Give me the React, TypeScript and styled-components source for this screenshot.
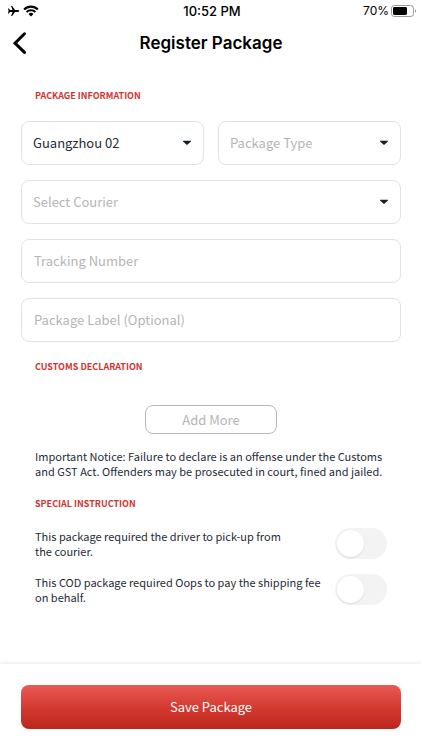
import React, { useId, useState } from "react";
import styled, { createGlobalStyle } from "styled-components";

const bodyFont = '"Noto Sans CJK SC", "Noto Sans", sans-serif';
const systemFont = 'Inter, "Liberation Sans", sans-serif';

const colors = {
  ink: "#252b37",
  muted: "#b5b5b5",
  line: "#e2e2e2",
  red: "#d0342f",
};

const GlobalStyle = createGlobalStyle`
  *, *::before, *::after { box-sizing: border-box; }
  body { margin: 0; background: #fff; color: ${colors.ink}; font-family: ${bodyFont}; }
  button, input, select { font: inherit; margin: 0; }
`;

const Screen = styled.div`
  display: flex;
  flex-direction: column;
  min-height: 100vh;
`;

const StatusBar = styled.div`
  display: grid;
  grid-template-columns: 1fr auto 1fr;
  align-items: center;
  height: 22px;
  padding: 0 5px 0 7px;
  color: #000;
  font-family: ${systemFont};
  line-height: 22px;
`;

const StatusGroup = styled.div<{ $end?: boolean }>`
  display: flex;
  align-items: center;
  justify-content: ${(p) => (p.$end ? "flex-end" : "flex-start")};
  gap: ${(p) => (p.$end ? 2 : 3)}px;
  font-size: 12px;
`;

const Clock = styled.time`
  font-size: 13px;
  font-weight: 500;
`;

const Header = styled.header`
  display: grid;
  grid-template-columns: 40px 1fr 40px;
  align-items: center;
  height: 42px;
`;

const BackButton = styled.button`
  display: flex;
  align-items: center;
  height: 42px;
  padding: 0 0 0 12px;
  border: 0;
  background: none;
  color: #000;
`;

const Title = styled.h1`
  margin: 0;
  color: #000;
  font-family: ${systemFont};
  font-size: 17px;
  font-weight: 600;
  line-height: 24px;
  text-align: center;
`;

const Content = styled.main`
  flex: 1;
  padding: 24px 21px;
`;

const SectionTitle = styled.h2`
  margin: 0 14px;
  color: ${colors.red};
  font-size: 9px;
  font-weight: 700;
  line-height: 16px;
  text-transform: uppercase;
`;

const Fields = styled.div`
  display: grid;
  grid-template-columns: 1fr 1fr;
  gap: 15px 14px;
  margin: 17px 0;
`;

const FieldBox = styled.div<{ $wide?: boolean }>`
  display: grid;
  align-items: center;
  grid-column: ${(p) => (p.$wide ? "1 / -1" : "auto")};
  min-width: 0;

  > * { grid-area: 1 / 1; }
  > svg { justify-self: end; margin-right: 12px; pointer-events: none; }
`;

const Select = styled.select<{ $empty: boolean }>`
  appearance: none;
  width: 100%;
  height: 44px;
  padding: 0 30px 2px 11px;
  border: 1px solid ${colors.line};
  border-radius: 8px;
  background: #fff;
  color: ${(p) => (p.$empty ? colors.muted : colors.ink)};
  font-size: 13px;
`;

const TextInput = styled.input`
  width: 100%;
  height: 44px;
  padding: 0 12px 2px;
  border: 1px solid ${colors.line};
  border-radius: 8px;
  background: #fff;
  color: ${colors.ink};
  font-size: 13px;

  &::placeholder { color: ${colors.muted}; opacity: 1; }
`;

const AddButton = styled.button`
  display: block;
  width: 132px;
  height: 29px;
  margin: 30px auto 15px;
  padding: 0;
  border: 1px solid #b8b8b8;
  border-radius: 8px;
  background: #fff;
  color: ${colors.muted};
  font-size: 13px;
  line-height: 20px;
`;

const Notice = styled.p`
  margin: 0 14px 17px;
  font-size: 11px;
  line-height: 15px;
`;

const ToggleList = styled.div`
  display: grid;
  gap: 15px;
  margin: 16px 14px 0;
`;

const ToggleRow = styled.div`
  display: flex;
  align-items: center;
  justify-content: space-between;
  gap: 12px;
`;

const ToggleLabel = styled.label`
  max-width: 288px;
  font-size: 11px;
  line-height: 15px;
`;

const Switch = styled.input`
  appearance: none;
  display: flex;
  align-items: center;
  flex: none;
  width: 52px;
  height: 31px;
  padding: 0 2px;
  border-radius: 16px;
  background: #f3f3f3;

  &::before {
    content: "";
    width: 27px;
    height: 27px;
    border-radius: 50%;
    background: #fff;
    box-shadow: 0 1px 2px rgba(0, 0, 0, 0.1);
  }

  &:checked { justify-content: flex-end; background: ${colors.red}; }
`;

const Footer = styled.footer`
  padding: 21px;
  background: #fff;
  box-shadow: 0 -1px 4px rgba(0, 0, 0, 0.09);
`;

const SaveButton = styled.button`
  display: block;
  width: 100%;
  height: 44px;
  padding: 0;
  border: 0;
  border-radius: 8px;
  background: linear-gradient(#e95a54, #d3382f 55%, #bb271c);
  color: #fff;
  font-size: 13px;
  line-height: 20px;
`;

const AirplaneIcon = () => (
  <svg width="13" height="12" viewBox="0 0 13 12" aria-hidden="true">
    <path
      fill="#000"
      d="M12.2 6c0 .6-.8.9-1.6.9H8L5.2 11H4.1l1.4-4.1H3L1.9 8.4H1L1.6 6 1 3.6h.9L3 5.1h2.5L4.1 1h1.1L8 5.1h2.6c.8 0 1.6.3 1.6.9Z"
    />
  </svg>
);

const WifiIcon = () => (
  <svg width="16" height="12" viewBox="0 0 16 12" aria-hidden="true">
    <g fill="none" stroke="#000" strokeWidth="2.1">
      <path d="M1.1 4.5a9.8 9.8 0 0 1 13.8 0" />
      <path d="M3.6 7.1a6.3 6.3 0 0 1 8.8 0" />
    </g>
    <path fill="#000" d="M5.5 9a3.6 3.6 0 0 1 5 0L8 11.5Z" />
  </svg>
);

const BatteryIcon = () => (
  <svg width="26" height="12" viewBox="0 0 26 12" aria-hidden="true">
    <rect x="0.5" y="0.5" width="22" height="11" rx="2.8" fill="none" stroke="#999" />
    <rect x="2" y="2" width="14" height="8" rx="1.4" fill="#000" />
    <path d="M24 4.2v3.6c1.6-.6 1.6-3 0-3.6Z" fill="#999" />
  </svg>
);

const BackIcon = () => (
  <svg width="16" height="24" viewBox="0 0 16 24" aria-hidden="true">
    <path
      d="M12.5 2.8 3 12.2l9.5 9.2"
      fill="none"
      stroke="currentColor"
      strokeWidth="3"
      strokeLinecap="round"
    />
  </svg>
);

const CaretIcon = () => (
  <svg width="10" height="6" viewBox="0 0 10 6" aria-hidden="true">
    <path fill="#17202a" d="M1.8.7h6.4c.8 0 1 .6.5 1L5.6 4.6a.8.8 0 0 1-1.2 0L1.3 1.7c-.5-.4-.3-1 .5-1Z" />
  </svg>
);

type SelectFieldProps = {
  label: string;
  options: string[];
  initial?: string;
  wide?: boolean;
};

function SelectField({ label, options, initial = "", wide }: SelectFieldProps) {
  const [value, setValue] = useState(initial);
  return (
    <FieldBox $wide={wide}>
      <Select
        aria-label={label}
        value={value}
        $empty={!value}
        onChange={(e) => setValue(e.target.value)}
      >
        {!initial && <option value="">{label}</option>}
        {options.map((option) => (
          <option key={option}>{option}</option>
        ))}
      </Select>
      <CaretIcon />
    </FieldBox>
  );
}

function TextField({ label }: { label: string }) {
  return (
    <FieldBox $wide>
      <TextInput type="text" aria-label={label} placeholder={label} />
    </FieldBox>
  );
}

function ToggleField({ children }: { children: React.ReactNode }) {
  const id = useId();
  return (
    <ToggleRow>
      <ToggleLabel htmlFor={id}>{children}</ToggleLabel>
      <Switch id={id} type="checkbox" role="switch" />
    </ToggleRow>
  );
}

export default function App() {
  return (
    <Screen>
      <GlobalStyle />
      <StatusBar>
        <StatusGroup>
          <AirplaneIcon />
          <WifiIcon />
        </StatusGroup>
        <Clock>10:52 PM</Clock>
        <StatusGroup $end>
          <span>70%</span>
          <BatteryIcon />
        </StatusGroup>
      </StatusBar>
      <Header>
        <BackButton type="button" aria-label="Back">
          <BackIcon />
        </BackButton>
        <Title>Register Package</Title>
      </Header>
      <Content>
        <SectionTitle>Package Information</SectionTitle>
        <Fields>
          <SelectField label="Warehouse" options={["Guangzhou 02"]} initial="Guangzhou 02" />
          <SelectField label="Package Type" options={[]} />
          <SelectField label="Select Courier" options={[]} wide />
          <TextField label="Tracking Number" />
          <TextField label="Package Label (Optional)" />
        </Fields>
        <SectionTitle>Customs Declaration</SectionTitle>
        <AddButton type="button">Add More</AddButton>
        <Notice>
          Important Notice: Failure to declare is an offense under the Customs and GST Act.
          Offenders may be prosecuted in court, fined and jailed.
        </Notice>
        <SectionTitle>Special Instruction</SectionTitle>
        <ToggleList>
          <ToggleField>
            This package required the driver to pick-up from
            <br />
            the courier.
          </ToggleField>
          <ToggleField>This COD package required Oops to pay the shipping fee on behalf.</ToggleField>
        </ToggleList>
      </Content>
      <Footer>
        <SaveButton type="button">Save Package</SaveButton>
      </Footer>
    </Screen>
  );
}
